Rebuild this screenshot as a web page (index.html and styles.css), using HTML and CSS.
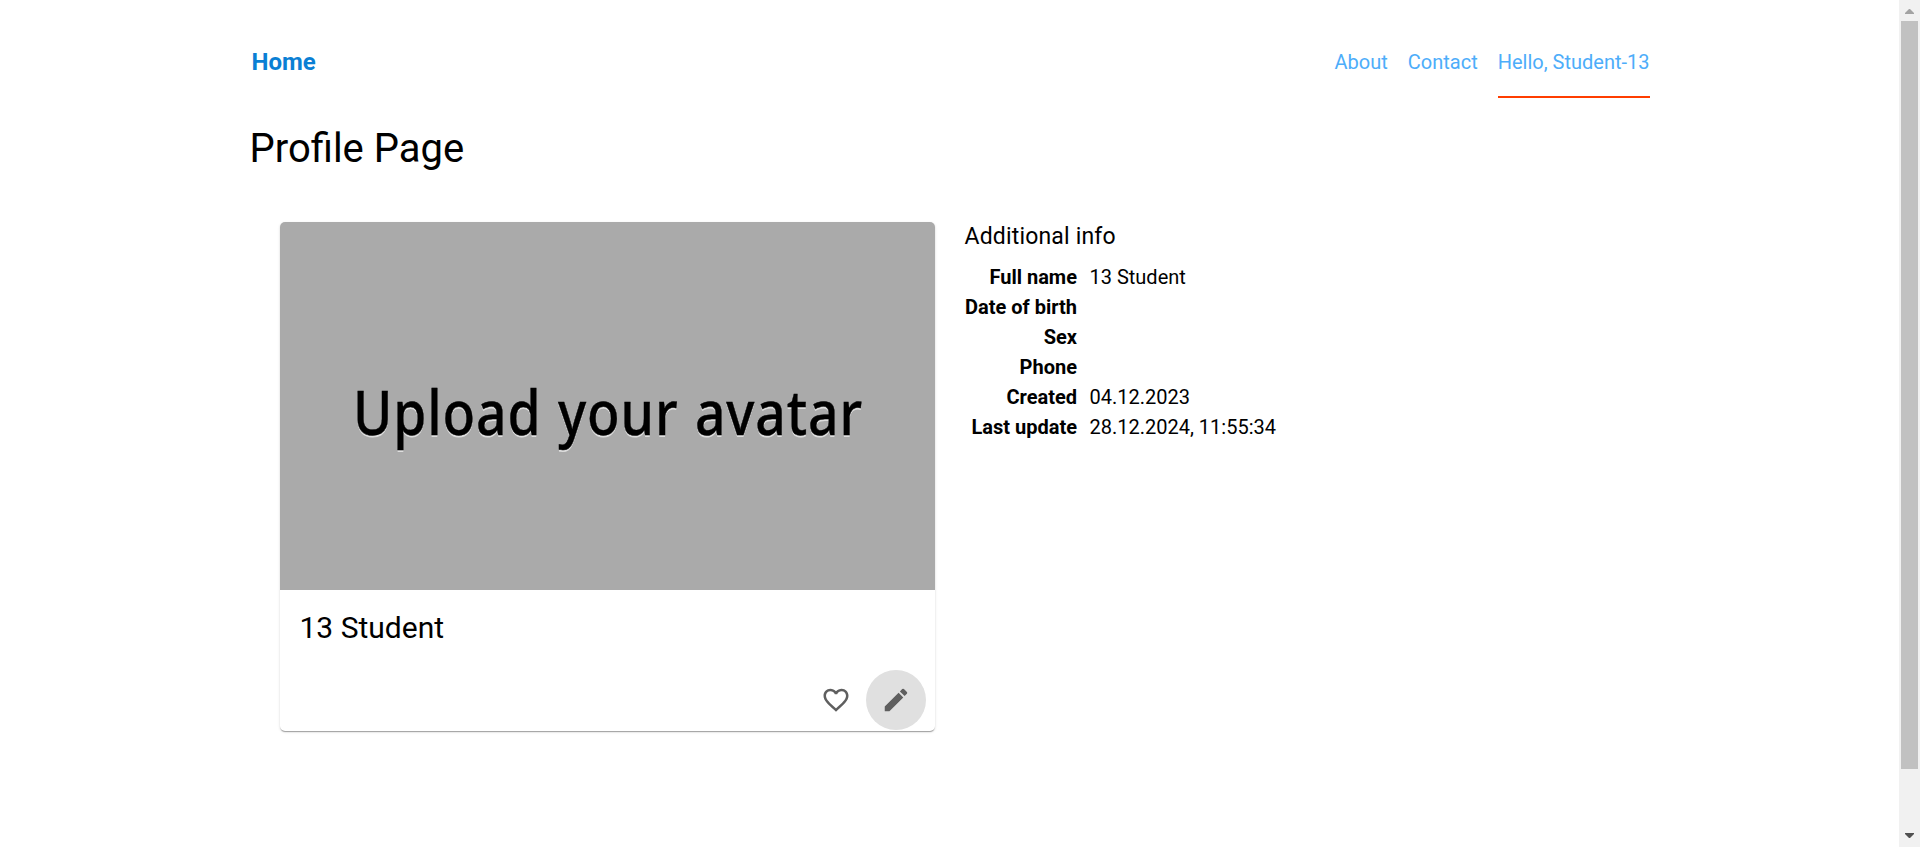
FILE: index.html
```html
<!DOCTYPE html>
<html lang="en">
<head>
<meta charset="utf-8">
<title>Profile Page</title>
<link rel="stylesheet" href="styles.css">
</head>
<body>
<div class="window">
  <div class="page">
    <header class="header">
      <a class="brand">Home</a>
      <nav class="nav">
        <a class="nav-link">About</a>
        <a class="nav-link">Contact</a>
        <a class="nav-link active">Hello, Student-13</a>
      </nav>
    </header>
    <h1 class="title">Profile Page</h1>
    <main class="profile">
      <section class="card">
        <svg class="avatar" viewBox="0 0 655 368">
          <text class="avatar-shadow" x="73" y="214.5" textLength="510" lengthAdjust="spacingAndGlyphs">Upload your avatar</text>
          <text class="avatar-text" x="73" y="212.5" textLength="510" lengthAdjust="spacingAndGlyphs">Upload your avatar</text>
        </svg>
        <h2 class="card-name">13 Student</h2>
        <div class="actions">
          <button class="icon-button"><svg class="icon" viewBox="0 0 24 24"><path d="M16.5 3c-1.74 0-3.41.81-4.5 2.09C10.91 3.81 9.24 3 7.5 3 4.42 3 2 5.42 2 8.5c0 3.78 3.4 6.86 8.55 11.54L12 21.35l1.45-1.32C18.6 15.36 22 12.28 22 8.5 22 5.42 19.58 3 16.5 3zm-4.4 15.55l-.1.1-.1-.1C7.14 14.24 4 11.39 4 8.5 4 6.5 5.5 5 7.5 5c1.54 0 3.04.99 3.57 2.36h1.87C13.46 5.99 14.96 5 16.5 5c2 0 3.5 1.5 3.5 3.5 0 2.89-3.14 5.74-7.9 10.05z"/></svg></button>
          <button class="icon-button focused"><svg class="icon" viewBox="0 0 24 24"><path d="M3 17.25V21h3.75L17.81 9.94l-3.75-3.75L3 17.25zM20.71 7.04c.39-.39.39-1.02 0-1.41l-2.34-2.34a.9959.9959 0 0 0-1.41 0l-1.83 1.83 3.75 3.75 1.83-1.83z"/></svg></button>
        </div>
      </section>
      <section class="info">
        <h3 class="info-title">Additional info</h3>
        <dl class="details">
          <dt>Full name</dt><dd>13 Student</dd>
          <dt>Date of birth</dt><dd></dd>
          <dt>Sex</dt><dd></dd>
          <dt>Phone</dt><dd></dd>
          <dt>Created</dt><dd>04.12.2023</dd>
          <dt>Last update</dt><dd>28.12.2024, 11:55:34</dd>
        </dl>
      </section>
    </main>
  </div>
  <div class="scrollbar">
    <svg class="arrow" viewBox="0 0 21 21"><path fill="#a3a3a3" d="M6 14v-1l4-4h1l4 4v1z"/></svg>
    <div class="thumb"></div>
    <svg class="arrow" viewBox="0 0 21 21"><path fill="#505050" d="M6 7v1l4 4h1l4-4V7z"/></svg>
  </div>
</div>
</body>
</html>
```
FILE: styles.css
```css
* { box-sizing: border-box; }
body {
  margin: 0;
  background: #fff;
  color: #000;
  font: 400 20px/30px Roboto, sans-serif;
}
h1, h2, h3, dl, dd { margin: 0; font-weight: 400; }
.window { display: flex; justify-content: space-between; height: 847px; overflow: hidden; }
.page { width: 1400px; margin-left: 249.5px; padding-top: 25px; }
.header { display: flex; justify-content: space-between; height: 73px; }
.brand {
  padding: 22px 2px 0;
  color: #0a7fd4;
  font-weight: 700;
  font-size: 24px;
}
.nav { display: flex; gap: 20px; }
.nav-link { padding-top: 22px; color: #4dadfa; }
.active { border-bottom: 2px solid #ff3d00; }
.title { margin-top: 26px; font-size: 40px; line-height: 50px; }
.profile { display: flex; gap: 30px; margin-top: 48px; padding-left: 30px; }
.card {
  width: 655px;
  height: 509px;
  border-radius: 5px;
  overflow: hidden;
  box-shadow: 0 2px 1px -1px rgba(0,0,0,.2), 0 1px 1px rgba(0,0,0,.14), 0 1px 3px rgba(0,0,0,.12);
}
.avatar { display: block; width: 655px; height: 368px; background: #aaa; }
.avatar text { font: 500 61px "Noto Sans", sans-serif; letter-spacing: 1px; word-spacing: 2px; }
.avatar-shadow { fill: #dedede; }
.avatar-text { fill: #000; stroke: #000; stroke-width: .4px; }
.card-name { padding: 20px 20px 0; font-size: 30px; line-height: 36px; }
.actions { display: flex; justify-content: flex-end; padding: 23.5px 9px 0; }
.icon-button {
  display: grid;
  place-items: center;
  width: 60px;
  height: 60px;
  padding: 0;
  border: 0;
  border-radius: 50%;
  background: none;
}
.focused { background: #e0e0e0; }
.icon { width: 30px; height: 30px; fill: #5f5f5f; }
.info-title { padding-top: 1px; font-size: 23px; line-height: 28px; letter-spacing: .17px; }
.details {
  display: grid;
  grid-template-columns: max-content max-content;
  grid-auto-rows: 30px;
  column-gap: 12.5px;
  margin: 11px 0 0 .5px;
}
.details dt { font-weight: 700; text-align: right; }
.scrollbar { width: 21px; background: #f1f1f1; }
.arrow { display: block; width: 21px; height: 21px; }
.thumb { width: 17px; height: 748px; margin: 0 2px 57px; background: #c1c1c1; }
```
